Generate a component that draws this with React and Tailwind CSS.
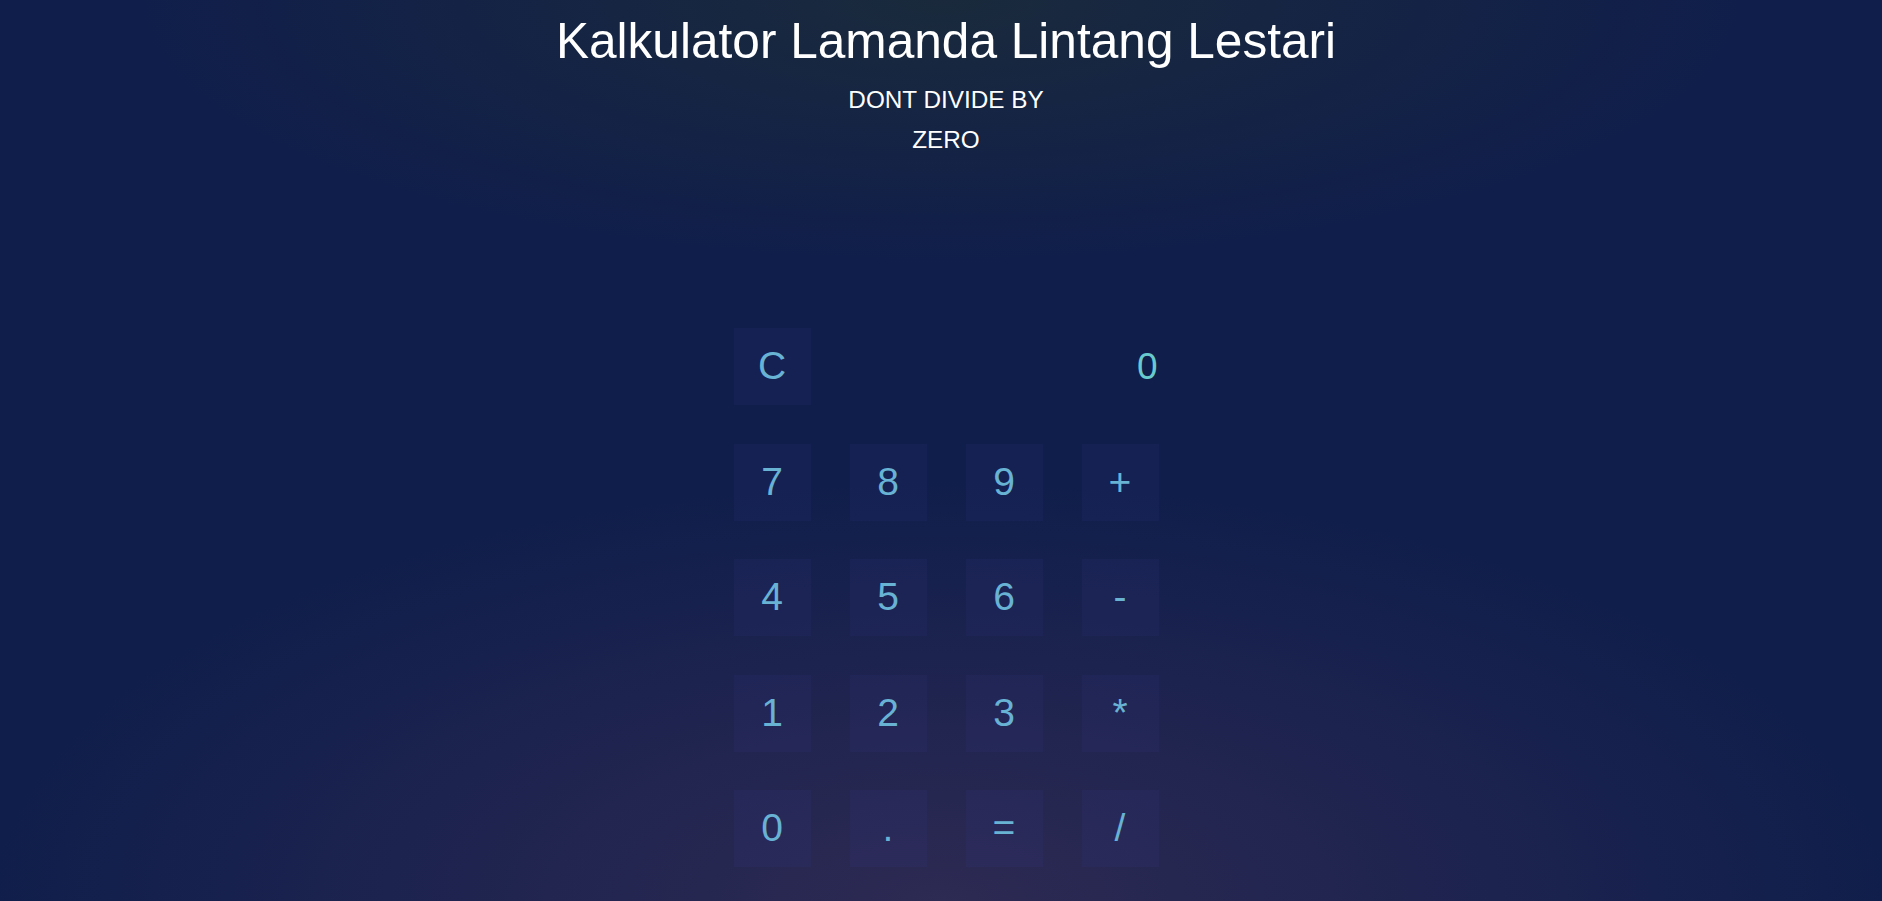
import React, { useState } from "react";

const KEYS = ["7", "8", "9", "+", "4", "5", "6", "-", "1", "2", "3", "*", "0", ".", "=", "/"];

export default function App() {
  const [display, setDisplay] = useState("0");

  const press = (k) => {
    if (k === "=") {
      try {
        // eslint-disable-next-line no-new-func
        const result = Function(`"use strict"; return (${display})`)();
        setDisplay(String(result));
      } catch (e) {
        setDisplay("Error");
      }
      return;
    }
    setDisplay((prev) => (prev === "0" || prev === "Error" ? k : prev + k));
  };

  return (
    <div className="min-h-screen w-full overflow-hidden bg-[#101e4b] bg-[image:radial-gradient(ellipse_800px_260px_at_50%_0%,#1a2a3c_0%,rgba(16,30,75,0)_100%),radial-gradient(ellipse_950px_420px_at_50%_100%,#2d2a53_0%,rgba(16,30,75,0)_100%)] font-['Liberation_Sans',Arial,sans-serif] text-white">
      <div className="flex flex-col items-center pl-[10px] pt-[13px]">
        {/* === Header === */}
        <h1 className="text-[49.6px] leading-[57.5px] font-normal">
          Kalkulator Lamanda Lintang Lestari
        </h1>
        <p className="mt-[9px] w-[220px] text-center text-[24.3px] leading-[40px]">
          DONT DIVIDE BY ZERO
        </p>

        {/* === Calculator === */}
        <div className="mt-[168.5px] grid grid-cols-[repeat(4,77px)] gap-x-[39px] gap-y-[38.5px]">
          <button
            onClick={() => setDisplay("0")}
            className="flex h-[77px] w-[77px] items-center justify-center bg-[rgba(60,60,150,0.12)] text-[39px] text-[#68b2d4]"
          >
            C
          </button>
          <div className="col-span-3 flex items-center justify-end pr-[1px] text-[37px] text-[#68cacd]">
            {display}
          </div>
          {KEYS.map((k) => (
            <button
              key={k}
              onClick={() => press(k)}
              className="flex h-[77px] w-[77px] items-center justify-center bg-[rgba(60,60,150,0.12)] text-[39px] text-[#68b2d4]"
            >
              {k}
            </button>
          ))}
        </div>
      </div>
    </div>
  );
}
